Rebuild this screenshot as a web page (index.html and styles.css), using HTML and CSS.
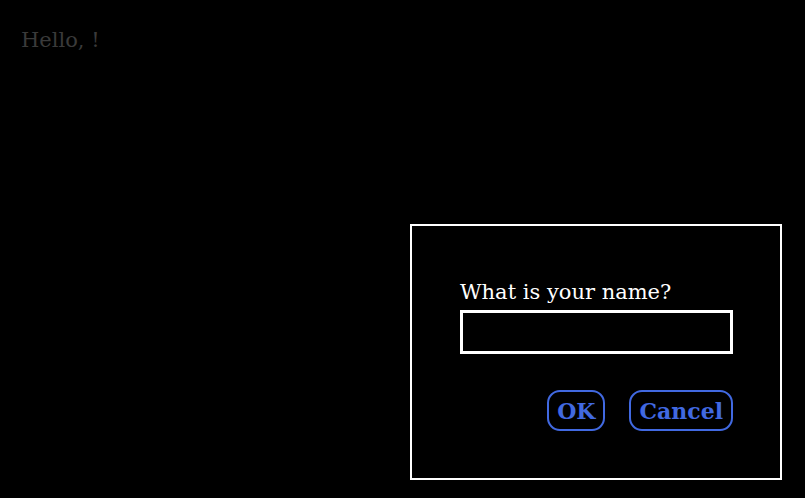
FILE: index.html
```html
<!DOCTYPE html>
<html>
<head>
<meta charset="utf-8">
<link rel="stylesheet" href="styles.css">
</head>
<body>
<p class="greeting">Hello, !</p>
<div class="dialog">
  <form class="form">
    <label class="label" for="name">What is your name?</label>
    <input class="input" id="name" type="text">
    <div class="actions">
      <button type="button" class="btn">OK</button>
      <button type="button" class="btn">Cancel</button>
    </div>
  </form>
</div>
</body>
</html>
```
FILE: styles.css
```css
html, body {
  margin: 0;
  background: #000;
  height: 100%;
}
body {
  font-family: "DejaVu Serif", Georgia, serif;
  color: #fff;
  position: relative;
  overflow: hidden;
}
.greeting {
  margin: 0;
  padding: 26px 0 0 21px;
  font-size: 21px;
  line-height: 28px;
  color: #3a3a3a;
}
.dialog {
  position: absolute;
  left: 410px;
  top: 224px;
  width: 372px;
  height: 256px;
  box-sizing: border-box;
  border: 2px solid #fff;
  padding: 48px 47px 48px 48px;
}
.form {
  display: flex;
  flex-direction: column;
}
.label {
  font-size: 21px;
  line-height: 28px;
  margin-top: 4px;
  margin-bottom: 4px;
}
.input {
  margin: 0;
  height: 44px;
  box-sizing: border-box;
  border: 3px solid #fff;
  background: #000;
  color: #fff;
  outline: none;
}
.actions {
  display: flex;
  justify-content: flex-end;
  gap: 24px;
  margin-top: 36px;
}
.btn {
  font-family: "DejaVu Serif", Georgia, serif;
  font-weight: bold;
  font-size: 22px;
  height: 41px;
  padding: 0 8px;
  border: 2px solid #4169e1;
  border-radius: 13px;
  background: #000;
  color: #4169e1;
}
```
